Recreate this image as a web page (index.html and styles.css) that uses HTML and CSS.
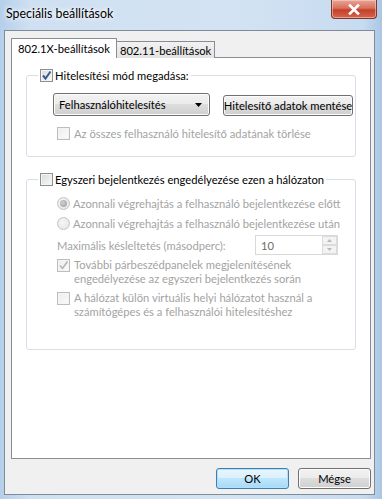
FILE: index.html
```html
<!DOCTYPE html>
<html lang="hu">
<head>
<meta charset="utf-8">
<title>Speciális beállítások</title>
<link rel="stylesheet" href="styles.css">
</head>
<body>
<div class="window">
  <div class="titlebar">
    <span class="title">Speciális beállítások</span>
    <span class="close"><svg width="14" height="11" viewBox="0 0 14 11"><path d="M3 1.5 L11 9.5 M11 1.5 L3 9.5" stroke="#fff" stroke-width="2.6" stroke-linecap="square" fill="none"/></svg></span>
  </div>
  <div class="client">
    <div class="tabs">
      <div class="tabstrip">
        <span class="tab active">802.1X-beállítások</span>
        <span class="tab">802.11-beállítások</span>
      </div>
      <div class="panel">
        <fieldset class="group g1">
          <legend><span class="cb checked"><svg width="11" height="11" viewBox="0 0 11 11"><path d="M2 5.5 L4.5 8.5 L9.5 1.5" stroke="#3c5a8f" stroke-width="2" fill="none"/></svg></span>Hitelesítési mód megadása:</legend>
          <div class="inner">
            <div class="row">
              <span class="combo">Felhasználóhitelesítés<svg class="arrow" width="7" height="4" viewBox="0 0 7 4"><path d="M0 0 H7 L3.5 4 Z" fill="#000"/></svg></span>
              <span class="btn save">Hitelesítő adatok mentése</span>
            </div>
            <div class="line disabled clear"><span class="cb dis"></span>Az összes felhasználó hitelesítő adatának törlése</div>
          </div>
        </fieldset>
        <fieldset class="group g2">
          <legend><span class="cb"></span>Egyszeri bejelentkezés engedélyezése ezen a hálózaton</legend>
          <div class="inner">
            <div class="line disabled r1"><span class="radio on"></span>Azonnali végrehajtás a felhasználó bejelentkezése előtt</div>
            <div class="line disabled r2"><span class="radio"></span>Azonnali végrehajtás a felhasználó bejelentkezése után</div>
            <div class="line disabled delay"><span>Maximális késleltetés (másodperc):</span><span class="spin"><span class="val">10</span><span class="arrows"><span class="sa"><svg width="5" height="3" viewBox="0 0 5 3"><path d="M0 3 L2.5 0 L5 3Z" fill="#b8b8b8"/></svg></span><span class="sa"><svg width="5" height="3" viewBox="0 0 5 3"><path d="M0 0 L2.5 3 L5 0Z" fill="#b8b8b8"/></svg></span></span></span></div>
            <div class="line disabled multi c1"><span class="cb dis"><svg width="11" height="11" viewBox="0 0 11 11"><path d="M2 5.5 L4.5 8.5 L9.5 1.5" stroke="#b5b5b5" stroke-width="1.6" fill="none"/></svg></span><span>További párbeszédpanelek megjelenítésének<br>engedélyezése az egyszeri bejelentkezés során</span></div>
            <div class="line disabled multi c2"><span class="cb dis"></span><span>A hálózat külön virtuális helyi hálózatot használ a<br>számítógépes és a felhasználói hitelesítéshez</span></div>
          </div>
        </fieldset>
      </div>
    </div>
    <div class="buttons">
      <span class="btn wide default">OK</span>
      <span class="btn wide">Mégse</span>
    </div>
  </div>
</div>
</body>
</html>
```
FILE: styles.css
```css
* { box-sizing: border-box; }
html, body { margin: 0; padding: 0; }
body {
  width: 382px; height: 499px; overflow: hidden;
  font-family: Lato, "Liberation Sans", sans-serif;
  font-size: 11.2px; color: #1e1e1e;
}
.window {
  width: 382px; height: 499px;
  background: linear-gradient(90deg, #b5cfea 0%, #cfe0f2 8%, #d3e3f3 60%, #c7dbf0 95%, #aac6e4 100%);
  display: flex; flex-direction: column;
}
.titlebar {
  height: 30px; display: flex; align-items: flex-start; justify-content: space-between;
  padding: 0 5px 0 6px;
}
.title { margin-top: 6px; font-size: 12.4px; color: #000; text-shadow: 0 0 6px #fff, 0 0 4px #fff; }
.close {
  width: 46px; height: 19px;
  border: 1px solid #7b3a2f; border-top: none;
  border-radius: 0 0 4px 4px;
  background: linear-gradient(#e9a597 0%, #d8715c 45%, #c4402a 55%, #d8644c 100%);
  box-shadow: inset 0 0 0 1px rgba(255,220,210,0.5);
  display: flex; align-items: center; justify-content: center;
}
.client {
  flex: 1; margin: 0 7px 4px 4px;
  border: 1px solid #7f8b97;
  background: #f0f0f0;
  display: flex; flex-direction: column;
  padding: 7px 3px 0 6px;
}
.tabs { display: flex; flex-direction: column; }
.tabstrip { display: flex; align-items: flex-end; height: 19px; }
.tab {
  height: 17px; padding: 0 3px; margin-bottom: -1px;
  border: 1px solid #898c95; border-bottom: none;
  background: linear-gradient(#f2f2f2, #e3e3e3);
  line-height: 17px; position: relative; color: #000;
}
.tab + .tab { border-left: none; }
.tab.active {
  height: 20px; background: #fff; z-index: 1; padding: 0 6px; line-height: 19px;
}
.panel {
  height: 402px; background: #fff;
  border: 1px solid #898c95;
  padding: 9px 14px 0 14px;
  display: flex; flex-direction: column; gap: 14px;
}
.group {
  margin: 0; border: 1px solid #d5dfe5; border-radius: 3px;
  padding: 0; min-width: 0;
}
.group legend {
  margin-left: 11px; padding: 0 2px;
  display: flex; align-items: center; height: 16px; color: #000;
}
.group legend .cb { margin-right: 2px; }
.inner { margin-left: 30px; display: flex; flex-direction: column; }
.cb {
  width: 13px; height: 13px; flex: none;
  border: 1px solid #8e8f8f;
  background: linear-gradient(135deg, #d8dadc 0%, #f6f6f6 90%);
  box-shadow: inset 0 0 0 1px #f4f4f4;
  display: inline-flex; align-items: center; justify-content: center;
}
.cb.dis { border-color: #bdbdbd; background: linear-gradient(135deg, #ededed, #fbfbfb); }
.radio {
  width: 13px; height: 13px; flex: none; margin-right: 3px; border-radius: 50%;
  border: 1px solid #c3c3c3;
  background: radial-gradient(circle at 40% 40%, #f7f7f7, #e2e2e2);
  position: relative;
}
.radio.on::after {
  content: ""; position: absolute; left: 2px; top: 2px; width: 7px; height: 7px; border-radius: 50%;
  background: radial-gradient(circle at 40% 40%, #d0d0d0, #9a9a9a);
}
.row { display: flex; align-items: flex-end; gap: 13px; margin-top: 10px; margin-left: -4px; }
.combo {
  width: 157px; height: 23px; border: 1px solid #707070; border-radius: 3px;
  background: linear-gradient(#f2f2f2 0%, #ebebeb 49%, #dddddd 50%, #cfcfcf 100%);
  box-shadow: inset 0 0 0 1px #fcfcfc;
  padding: 0 0 0 5px; display: flex; align-items: center; justify-content: space-between;
  color: #000;
}
.arrow { margin-right: 7px; }
.btn {
  height: 21px; border: 1px solid #707070; border-radius: 3px;
  background: linear-gradient(#f2f2f2 0%, #ebebeb 49%, #dddddd 50%, #cfcfcf 100%);
  box-shadow: inset 0 0 0 1px #fcfcfc;
  padding: 0 3px; display: inline-flex; align-items: center; justify-content: center;
  color: #000; white-space: nowrap;
}
.btn.save { width: 130px; height: 21px; }
.line { display: flex; align-items: center; height: 16px; }
.line .cb { margin-right: 4px; }
.disabled { color: #a3a3a3; }
.clear { margin-top: 9px; margin-bottom: 15px; }
.g2 .inner { padding-bottom: 30px; }
.r1 { margin-top: 8px; }
.r2 { margin-top: 4px; }
.delay { margin-top: 4px; height: 20px; justify-content: space-between; padding-right: 17px; }
.spin {
  width: 83px; height: 20px; border: 1px solid #d9d9d9; background: #fff;
  display: flex; justify-content: space-between; align-items: stretch;
}
.val { padding: 3px 0 0 5px; color: #6d6d6d; }
.arrows { width: 15px; display: flex; flex-direction: column; }
.sa { flex: 1; border: 1px solid #dcdcdc; background: #f3f3f3; display: flex; align-items: center; justify-content: center; }
.multi { align-items: flex-start; line-height: 14px; height: auto; }
.multi .cb { margin-top: 1px; }
.c1 { margin-top: 3px; }
.c2 { margin-top: 5px; }
.buttons {
  display: flex; justify-content: flex-end; gap: 9px;
  padding: 9px 0 0 0;
}
.btn.wide { width: 73px; }
.btn.default {
  border-color: #3c7fb1;
  background: linear-gradient(#eaf6fd 0%, #d9f0fc 49%, #bee6fd 50%, #a7d9f5 100%);
  box-shadow: inset 0 0 0 1px #b3e0f9;
}
```
